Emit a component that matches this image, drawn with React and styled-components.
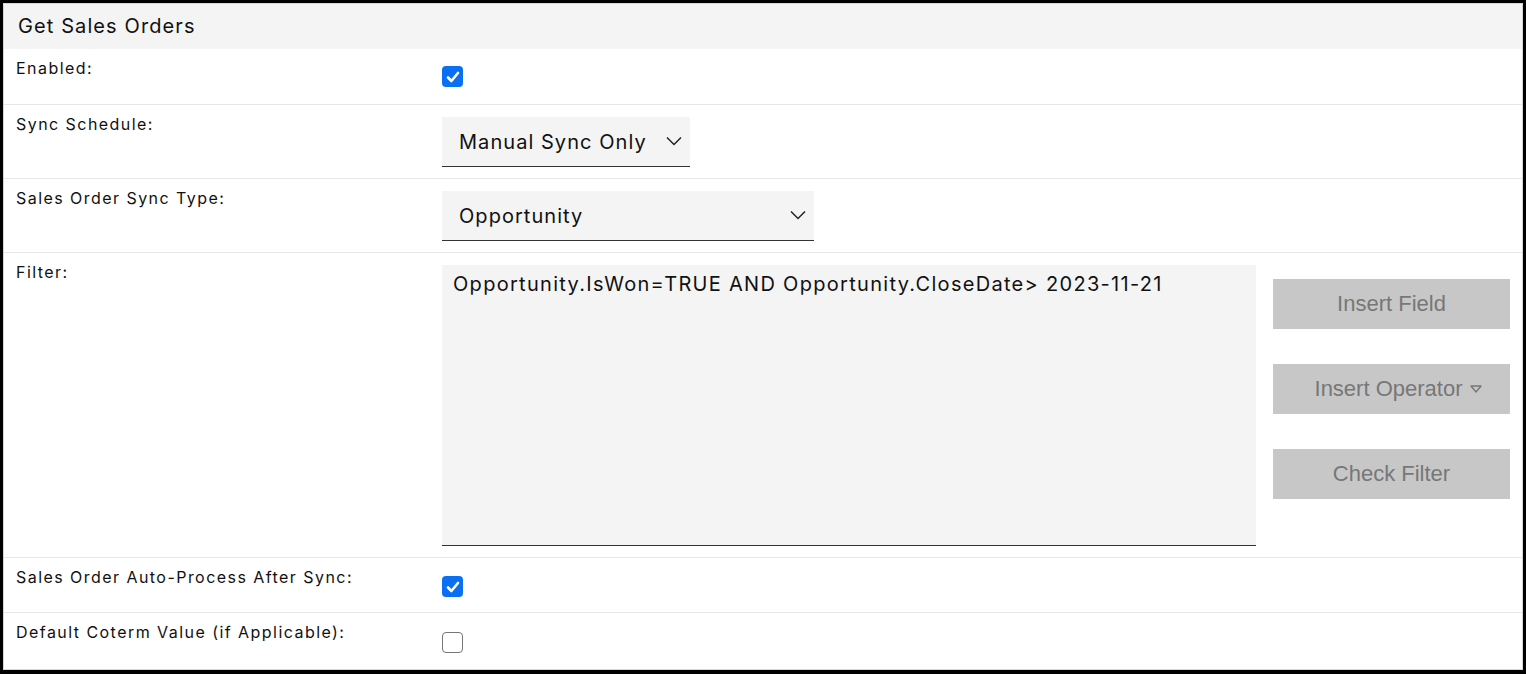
import React from 'react'
import styled, { createGlobalStyle } from 'styled-components'

const GlobalStyle = createGlobalStyle`
  html, body {
    margin: 0;
    padding: 0;
    background: #fff;
  }
  * {
    box-sizing: border-box;
  }
`

const Frame = styled.div`
  width: 1526px;
  height: 674px;
  border: 3px solid #000;
  border-bottom-width: 4px;
  background: #fff;
  font-family: Inter, 'Noto Sans', sans-serif;
  color: #111;
`

const Panel = styled.div`
  height: 100%;
  border: 1px solid #d6d6d6;
  display: flex;
  flex-direction: column;
`

const Header = styled.div`
  height: 45px;
  flex-shrink: 0;
  background: #f4f4f4;
  display: flex;
  align-items: center;
  padding: 0 0 1px 14px;
  font-size: 20px;
  letter-spacing: 1.1px;
`

const Row = styled.div`
  display: grid;
  grid-template-columns: 438px 1fr;
  height: ${(p) => p.h}px;
  flex-shrink: 0;
  border-bottom: 1px solid #e6e6e6;
  &:last-child {
    border-bottom: none;
    flex: 1;
  }
`

const Label = styled.div`
  padding: 9px 0 0 12px;
  font-size: 16px;
  line-height: 20px;
  letter-spacing: 1.45px;
`

const Value = styled.div`
  padding: ${(p) => p.pad || '12px 0'};
  display: flex;
  align-items: flex-start;
`

const Check = styled.span`
  width: 21px;
  height: 21px;
  border-radius: 4px;
  display: inline-flex;
  align-items: center;
  justify-content: center;
  background: ${(p) => (p.checked ? '#0a6ff0' : '#fff')};
  border: ${(p) => (p.checked ? 'none' : '1.5px solid #767676')};
`

const Select = styled.div`
  width: ${(p) => p.w}px;
  height: 50px;
  background: #f4f4f4;
  border-bottom: 1px solid #333;
  display: flex;
  align-items: center;
  justify-content: space-between;
  padding: 0 8px 0 17px;
  font-size: 20px;
  letter-spacing: 1.05px;
`

const Chevron = styled.svg`
  width: 16px;
  height: 10px;
  margin-bottom: 2px;
`

const FilterArea = styled.div`
  width: 814px;
  height: 281px;
  background: #f4f4f4;
  border-bottom: 1px solid #333;
  padding: 6px 11px;
  font-size: 20px;
  line-height: 26px;
  letter-spacing: 1.3px;
`

const ButtonColumn = styled.div`
  display: flex;
  flex-direction: column;
  gap: 35px;
  margin: 14px 0 0 17px;
`

const Button = styled.button`
  width: 237px;
  height: 50px;
  border: none;
  background: #c7c7c7;
  color: #777;
  font-family: 'Liberation Sans', Arial, sans-serif;
  font-size: 22px;
  display: flex;
  align-items: center;
  justify-content: center;
  gap: 8px;
  padding: 0 0 0 ${(p) => (p.caret ? '14px' : '0')};
`

const CheckBox = ({ checked }) => (
  <Check checked={checked}>
    {checked && (
      <svg width='14' height='12' viewBox='0 0 14 12'>
        <path d='M2 6.5 L5.4 10 L12 2' fill='none' stroke='#fff' strokeWidth='2.6' strokeLinecap='round' strokeLinejoin='round' />
      </svg>
    )}
  </Check>
)

const Dropdown = ({ w, children }) => (
  <Select w={w}>
    <span>{children}</span>
    <Chevron viewBox='0 0 16 10'>
      <polyline points='1,1.5 8,8.5 15,1.5' fill='none' stroke='#222' strokeWidth='1.5' />
    </Chevron>
  </Select>
)

const App = () => {
  return (
    <Frame>
      <GlobalStyle />
      <Panel>
        <Header>Get Sales Orders</Header>
        <Row h={56}>
          <Label>Enabled:</Label>
          <Value pad='17px 0 0'>
            <CheckBox checked />
          </Value>
        </Row>
        <Row h={74}>
          <Label>Sync Schedule:</Label>
          <Value>
            <Dropdown w={248}>Manual Sync Only</Dropdown>
          </Value>
        </Row>
        <Row h={74}>
          <Label>Sales Order Sync Type:</Label>
          <Value>
            <Dropdown w={372}>Opportunity</Dropdown>
          </Value>
        </Row>
        <Row h={305}>
          <Label>Filter:</Label>
          <Value>
            <FilterArea>Opportunity.IsWon=TRUE AND Opportunity.CloseDate&gt; 2023-11-21</FilterArea>
            <ButtonColumn>
              <Button>Insert Field</Button>
              <Button caret>
                Insert Operator
                <svg width='12' height='8' viewBox='0 0 12 8'>
                  <polygon points='1,1 11,1 6,7' fill='none' stroke='#777' strokeWidth='1.4' strokeLinejoin='round' />
                </svg>
              </Button>
              <Button>Check Filter</Button>
            </ButtonColumn>
          </Value>
        </Row>
        <Row h={55}>
          <Label>Sales Order Auto-Process After Sync:</Label>
          <Value pad='18px 0 0'>
            <CheckBox checked />
          </Value>
        </Row>
        <Row h={56}>
          <Label>Default Coterm Value (if Applicable):</Label>
          <Value pad='19px 0 0'>
            <CheckBox />
          </Value>
        </Row>
      </Panel>
    </Frame>
  )
}

export default App
